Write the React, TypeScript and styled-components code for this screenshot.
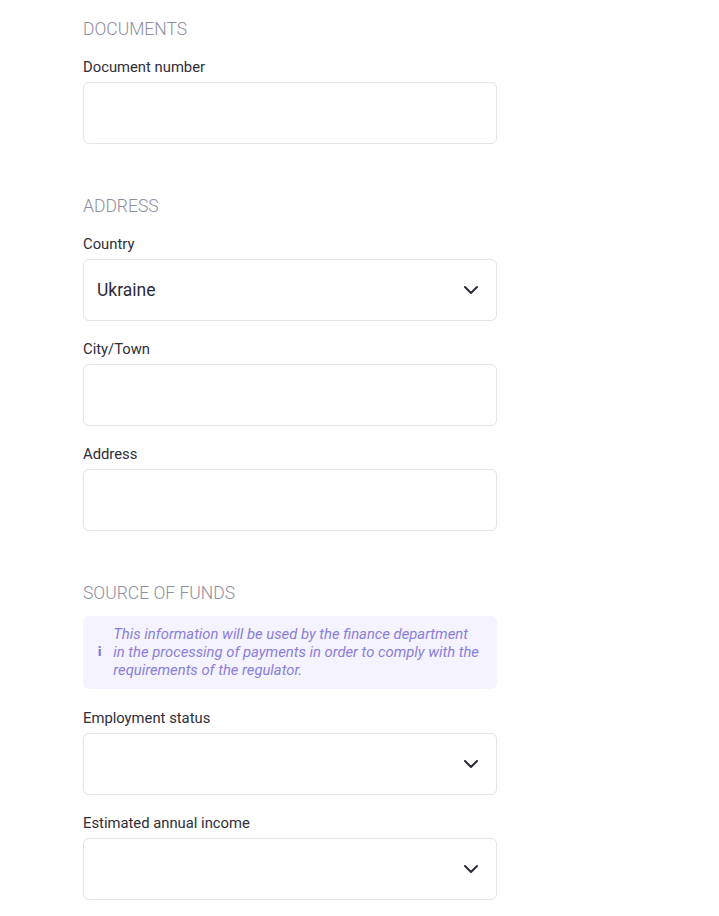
import * as React from "react";
import styled, { createGlobalStyle } from "styled-components";
import { ChevronDown } from "lucide-react";

const GlobalStyle = createGlobalStyle`
  body {
    margin: 0;
    background: #fff;
    font-family: Roboto, "Liberation Sans", sans-serif;
  }
`;

interface IField {
  label: string;
  kind: "input" | "select";
  value?: string;
}

const documents: IField[] = [{ label: "Document number", kind: "input" }];

const address: IField[] = [
  { label: "Country", kind: "select", value: "Ukraine" },
  { label: "City/Town", kind: "input" },
  { label: "Address", kind: "input" },
];

const funds: IField[] = [
  { label: "Employment status", kind: "select" },
  { label: "Estimated annual income", kind: "select" },
];

const infoLines = [
  "This information will be used by the finance department",
  "in the processing of payments in order to comply with the",
  "requirements of the regulator.",
];

const renderFields = (fields: IField[]) =>
  fields.map((field) => (
    <Field key={field.label}>
      <Label>{field.label}</Label>
      {field.kind === "input" ? (
        <TextInput type="text" defaultValue={field.value} />
      ) : (
        <SelectBox>
          <SelectValue>{field.value}</SelectValue>
          <ChevronDown size={24} strokeWidth={2} color="#2b2b37" />
        </SelectBox>
      )}
    </Field>
  ));

export default function App() {
  return (
    <Page>
      <GlobalStyle />
      <Form>
        <Section>
          <Heading>DOCUMENTS</Heading>
          {renderFields(documents)}
        </Section>
        <Section>
          <Heading>ADDRESS</Heading>
          {renderFields(address)}
        </Section>
        <Section>
          <Heading>SOURCE OF FUNDS</Heading>
          <InfoBox>
            <InfoIcon>i</InfoIcon>
            <InfoText>
              {infoLines.map((line) => (
                <InfoLine key={line}>{line}</InfoLine>
              ))}
            </InfoText>
          </InfoBox>
          {renderFields(funds)}
        </Section>
      </Form>
    </Page>
  );
}

const Page = styled.main`
  padding: 16px 0 0 83px;
`;

const Form = styled.form`
  width: 414px;
  display: flex;
  flex-direction: column;
`;

const Section = styled.section`
  display: flex;
  flex-direction: column;
  margin-bottom: 32px;
`;

const Heading = styled.h2`
  margin: 0 0 15px;
  padding-top: 1px;
  font-size: 17.5px;
  line-height: 24px;
  font-weight: 300;
  color: #8e8e9e;
`;

const Field = styled.div`
  display: flex;
  flex-direction: column;
  margin-bottom: 17px;
`;

const Label = styled.label`
  font-size: 14.8px;
  line-height: 20px;
  padding-top: 1px;
  color: #2e2e3a;
  margin-bottom: 5px;
`;

const TextInput = styled.input`
  box-sizing: border-box;
  height: 62px;
  width: 100%;
  border: 1px solid #e3e3e9;
  border-radius: 6px;
  padding: 0 13px;
  font: inherit;
  font-size: 17.5px;
  outline: none;
`;

const SelectBox = styled.div`
  box-sizing: border-box;
  height: 62px;
  border: 1px solid #e3e3e9;
  border-radius: 6px;
  padding: 0 13px;
  display: flex;
  align-items: center;
  justify-content: space-between;
`;

const SelectValue = styled.span`
  font-size: 17.5px;
  color: #2b2b37;
`;

const InfoBox = styled.div`
  margin: -4px 0 18px;
  padding: 9px 10px 10px 15px;
  background: #f5f3ff;
  border-radius: 6px;
  display: flex;
  align-items: center;
  gap: 12px;
`;

const InfoIcon = styled.span`
  font-size: 12px;
  font-weight: 900;
  color: #7c6fe0;
  line-height: 1;
`;

const InfoText = styled.p`
  margin: 0;
  font-size: 14.8px;
  line-height: 18px;
  font-style: italic;
  color: #8a7ddc;
`;

const InfoLine = styled.span`
  display: block;
  white-space: nowrap;
`;
